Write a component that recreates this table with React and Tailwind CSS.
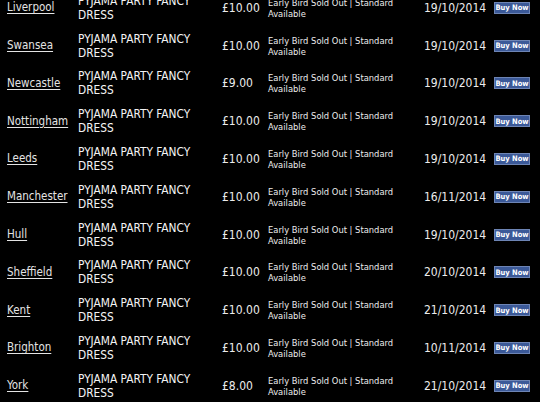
import React from "react";

const rows = [
  ["Liverpool", "£10.00", "19/10/2014"],
  ["Swansea", "£10.00", "19/10/2014"],
  ["Newcastle", "£9.00", "19/10/2014"],
  ["Nottingham", "£10.00", "19/10/2014"],
  ["Leeds", "£10.00", "19/10/2014"],
  ["Manchester", "£10.00", "16/11/2014"],
  ["Hull", "£10.00", "19/10/2014"],
  ["Sheffield", "£10.00", "20/10/2014"],
  ["Kent", "£10.00", "21/10/2014"],
  ["Brighton", "£10.00", "10/11/2014"],
  ["York", "£8.00", "21/10/2014"],
];

export default function App() {
  return (
    <div className="w-[540px] h-[405px] bg-white overflow-hidden" style={{ fontFamily: '"DejaVu Sans Condensed", "DejaVu Sans", sans-serif' }}>
      <div className="h-[402px] bg-black overflow-hidden">
        <div className="mt-[-11px]">
          {rows.map(([city, price, date]) => (
            <div key={city} className="flex items-center h-[37.8px]">
              <div className="w-[78px] pl-[7px] text-[11.5px] text-[#e4e4e4] whitespace-nowrap">
                <a className="underline underline-offset-2 decoration-[#e4e4e4]">{city}</a>
              </div>
              <div className="w-[144px] text-[11.8px] leading-[14px] text-[#f4f4f4] whitespace-nowrap">
                PYJAMA PARTY FANCY
                <br />
                DRESS
              </div>
              <div className="w-[46px] text-[12px] text-[#ececec]">{price}</div>
              <div className="w-[156px] text-[9.3px] leading-[11px] text-[#ececec] whitespace-nowrap">
                Early Bird Sold Out | Standard
                <br />
                Available
              </div>
              <div className="w-[70px] text-[12px] text-[#ececec]">{date}</div>
              <div className="w-[36px] h-[12px] bg-[#3b5998] border border-[#6d84b4] flex items-center justify-center text-[7.5px] font-bold text-white leading-none whitespace-nowrap">
                Buy Now
              </div>
            </div>
          ))}
        </div>
      </div>
    </div>
  );
}
